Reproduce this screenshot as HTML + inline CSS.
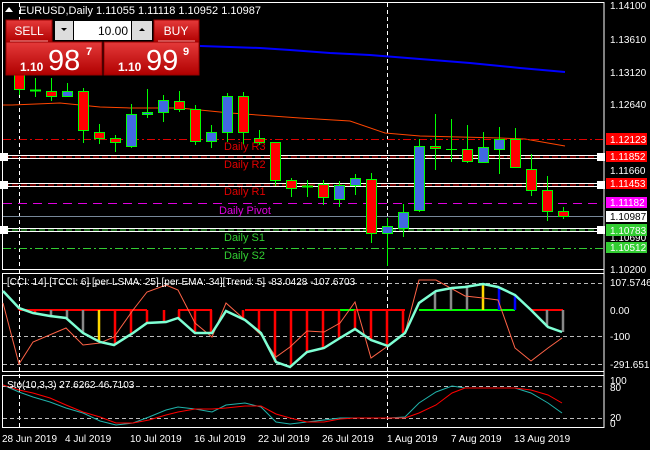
<!DOCTYPE html>
<html><head><meta charset="utf-8"><style>
html,body{margin:0;padding:0;background:#000;width:650px;height:450px;overflow:hidden}
svg{display:block}
text{font-family:"Liberation Sans",sans-serif}
.ax{fill:#fff;font-size:10px}
</style></head><body>
<svg width="650" height="450" viewBox="0 0 650 450" xmlns="http://www.w3.org/2000/svg">
<!-- borders -->
<rect x="2.5" y="2.5" width="601.5" height="267" fill="none" stroke="#fff" stroke-width="1"/>
<rect x="2.5" y="273.5" width="601.5" height="98" fill="none" stroke="#fff" stroke-width="1"/>
<rect x="2.5" y="375.5" width="601.5" height="52" fill="none" stroke="#fff" stroke-width="1"/>
<line x1="604" y1="2" x2="604" y2="428" stroke="#fff"/>
<!-- vertical dashed -->
<g stroke="#fff" stroke-dasharray="4,3">
<line x1="19.5" y1="3" x2="19.5" y2="427"/>
<line x1="387.5" y1="3" x2="387.5" y2="427"/>
</g>
<!-- MAs -->
<polyline fill="none" stroke="#0000ff" stroke-width="2" points="200,46 230,47 260,48 290,50 330,53 370,55 420,59 470,63 520,68 565,72"/>
<polyline fill="none" stroke="#ff4500" stroke-width="1" points="3,105 12,105 60,103 100,107 130,108 180,108 230,113 300,118 350,121 385,133 420,136 460,137 500,138 525,139 565,146"/>
<!-- level lines -->
<line x1="3" y1="139.5" x2="604" y2="139.5" stroke="#e00000" stroke-dasharray="8,3,2,3"/>
<line x1="3" y1="155.5" x2="604" y2="155.5" stroke="#fff"/>
<line x1="3" y1="158.5" x2="604" y2="158.5" stroke="#fff"/>
<line x1="3" y1="157" x2="604" y2="157" stroke="#e00000" stroke-dasharray="6,3"/>
<line x1="3" y1="183.5" x2="604" y2="183.5" stroke="#fff"/>
<line x1="3" y1="186.5" x2="604" y2="186.5" stroke="#fff"/>
<line x1="3" y1="185" x2="604" y2="185" stroke="#e00000" stroke-dasharray="6,3"/>
<line x1="3" y1="203.5" x2="604" y2="203.5" stroke="#e000e0" stroke-dasharray="9,6"/>
<line x1="3" y1="216.5" x2="604" y2="216.5" stroke="#778899"/>
<line x1="3" y1="228.5" x2="604" y2="228.5" stroke="#fff"/>
<line x1="3" y1="231.5" x2="604" y2="231.5" stroke="#fff"/>
<line x1="3" y1="230" x2="604" y2="230" stroke="#32cd32" stroke-dasharray="6,3"/>
<line x1="3" y1="248.5" x2="604" y2="248.5" stroke="#32cd32" stroke-dasharray="8,3,2,3"/>
<g fill="#fff"><rect x="0" y="153" width="8" height="8"/><rect x="0" y="181" width="8" height="8"/><rect x="0" y="226" width="8" height="8"/>
<rect x="597" y="153" width="8" height="8"/><rect x="597" y="181" width="8" height="8"/><rect x="597" y="226" width="8" height="8"/></g>
<g font-size="11">
<text x="224" y="150" fill="#e00000">Daily R3</text>
<text x="224" y="168" fill="#e00000">Daily R2</text>
<text x="224" y="195" fill="#e00000">Daily R1</text>
<text x="219" y="214" fill="#e000e0">Daily Pivot</text>
<text x="224" y="241" fill="#32cd32">Daily S1</text>
<text x="224" y="259" fill="#32cd32">Daily S2</text>
</g>
<!-- candles -->
<g stroke="#00ff00" stroke-width="1">
<line x1="19.5" y1="70" x2="19.5" y2="95"/><rect x="14.5" y="70.5" width="10" height="19" fill="#ff0000"/>
<line x1="35.5" y1="78" x2="35.5" y2="97"/><line x1="30" y1="90.5" x2="41" y2="90.5" stroke-width="2"/>
<line x1="51.5" y1="78" x2="51.5" y2="101"/><rect x="46.5" y="91.5" width="10" height="5" fill="#ff0000"/>
<line x1="67.5" y1="83" x2="67.5" y2="97"/><rect x="62.5" y="91.5" width="10" height="5" fill="#4169e1"/>
<line x1="83.5" y1="88" x2="83.5" y2="143"/><rect x="78.5" y="91.5" width="10" height="39" fill="#ff0000"/>
<line x1="99.5" y1="124" x2="99.5" y2="144"/><rect x="94.5" y="132.5" width="10" height="6" fill="#ff0000"/>
<line x1="115.5" y1="135" x2="115.5" y2="152"/><rect x="110.5" y="138.5" width="10" height="4" fill="#ff0000"/>
<line x1="131.5" y1="104" x2="131.5" y2="148"/><rect x="126.5" y="114.5" width="10" height="32" fill="#4169e1"/>
<line x1="147.5" y1="89" x2="147.5" y2="118"/><rect x="142.5" y="112.5" width="10" height="2" fill="#4169e1"/>
<line x1="163.5" y1="95" x2="163.5" y2="122"/><rect x="158.5" y="100.5" width="10" height="12" fill="#4169e1"/>
<line x1="179.5" y1="91" x2="179.5" y2="112"/><rect x="174.5" y="101.5" width="10" height="8" fill="#ff0000"/>
<line x1="195.5" y1="105" x2="195.5" y2="145"/><rect x="190.5" y="109.5" width="10" height="32" fill="#ff0000"/>
<line x1="211.5" y1="125" x2="211.5" y2="148"/><rect x="206.5" y="132.5" width="10" height="9" fill="#4169e1"/>
<line x1="227.5" y1="93" x2="227.5" y2="142"/><rect x="222.5" y="96.5" width="10" height="36" fill="#4169e1"/>
<line x1="243.5" y1="92" x2="243.5" y2="144"/><rect x="238.5" y="96.5" width="10" height="36" fill="#ff0000"/>
<line x1="259.5" y1="130" x2="259.5" y2="145"/><rect x="254.5" y="138.5" width="10" height="4" fill="#ff0000"/>
<line x1="275.5" y1="142" x2="275.5" y2="186"/><rect x="270.5" y="142.5" width="10" height="38" fill="#ff0000"/>
<line x1="291.5" y1="178" x2="291.5" y2="197"/><rect x="286.5" y="180.5" width="10" height="8" fill="#ff0000"/>
<line x1="307.5" y1="180" x2="307.5" y2="197"/><line x1="302" y1="186.5" x2="313" y2="186.5" stroke-width="2"/>
<line x1="323.5" y1="180" x2="323.5" y2="205"/><rect x="318.5" y="184.5" width="10" height="13" fill="#ff0000"/>
<line x1="339.5" y1="181" x2="339.5" y2="207"/><rect x="334.5" y="185.5" width="10" height="14" fill="#4169e1"/>
<line x1="355.5" y1="174" x2="355.5" y2="195"/><rect x="350.5" y="178.5" width="10" height="7" fill="#4169e1"/>
<line x1="371.5" y1="173" x2="371.5" y2="243"/><rect x="366.5" y="179.5" width="10" height="54" fill="#ff0000"/>
<line x1="387.5" y1="218" x2="387.5" y2="266"/><rect x="382.5" y="226.5" width="10" height="7" fill="#4169e1"/>
<line x1="403.5" y1="204" x2="403.5" y2="237"/><rect x="398.5" y="212.5" width="10" height="16" fill="#4169e1"/>
<line x1="419.5" y1="139" x2="419.5" y2="212"/><rect x="414.5" y="146.5" width="10" height="64" fill="#4169e1"/>
<line x1="435.5" y1="114" x2="435.5" y2="170"/><rect x="430.5" y="146.5" width="10" height="2" fill="#ff0000"/>
<line x1="451.5" y1="119" x2="451.5" y2="162"/><line x1="446" y1="149.5" x2="457" y2="149.5"/>
<line x1="467.5" y1="125" x2="467.5" y2="163"/><rect x="462.5" y="149.5" width="10" height="12" fill="#ff0000"/>
<line x1="483.5" y1="132" x2="483.5" y2="163"/><rect x="478.5" y="147.5" width="10" height="15" fill="#4169e1"/>
<line x1="499.5" y1="127" x2="499.5" y2="174"/><rect x="494.5" y="139.5" width="10" height="10" fill="#4169e1"/>
<line x1="515.5" y1="128" x2="515.5" y2="168"/><rect x="510.5" y="139.5" width="10" height="28" fill="#ff0000"/>
<line x1="531.5" y1="154" x2="531.5" y2="196"/><rect x="526.5" y="169.5" width="10" height="21" fill="#ff0000"/>
<line x1="547.5" y1="176" x2="547.5" y2="221"/><rect x="542.5" y="190.5" width="10" height="21" fill="#ff0000"/>
<line x1="563.5" y1="207" x2="563.5" y2="219"/><rect x="558.5" y="211.5" width="10" height="5" fill="#ff0000"/>
</g>
<!-- price axis -->
<g class="ax">
<text x="610" y="9">1.14100</text>
<text x="610" y="43">1.13610</text>
<text x="610" y="76">1.13120</text>
<text x="610" y="108">1.12640</text>
<text x="610" y="174">1.11660</text>
<text x="610" y="241">1.10690</text>
<text x="610" y="273">1.10200</text>
</g>
<rect x="606" y="133" width="41" height="12" fill="#ff0000"/><text x="610" y="143" class="ax">1.12123</text>
<rect x="606" y="151" width="41" height="11" fill="#ff0000"/><text x="610" y="160" class="ax">1.11852</text>
<rect x="606" y="178" width="41" height="11" fill="#ff0000"/><text x="610" y="187" class="ax">1.11453</text>
<rect x="606" y="197" width="41" height="11" fill="#ff00ff"/><text x="610" y="206" class="ax">1.11182</text>
<rect x="606" y="211" width="41" height="11" fill="#fff"/><text x="610" y="220" class="ax" style="fill:#000">1.10987</text>
<rect x="606" y="224" width="41" height="12" fill="#32cd32"/><text x="610" y="234" class="ax">1.10783</text>
<rect x="606" y="242" width="41" height="11" fill="#32cd32"/><text x="610" y="251" class="ax">1.10512</text>
<!-- CCI panel -->
<g stroke="#bbb" stroke-dasharray="4,3"><line x1="3" y1="283.5" x2="604" y2="283.5"/><line x1="3" y1="336.5" x2="604" y2="336.5"/><line x1="3" y1="364.5" x2="604" y2="364.5"/>
<line x1="3" y1="386.5" x2="604" y2="386.5"/><line x1="3" y1="418.5" x2="604" y2="418.5"/></g>
<g stroke-width="2">
<line x1="19" y1="310" x2="147" y2="310" stroke="#ff0000"/>
<line x1="178" y1="310" x2="212" y2="310" stroke="#ff0000"/>
<line x1="245" y1="310" x2="405" y2="310" stroke="#ff0000"/>
<line x1="340" y1="310" x2="355" y2="310" stroke="#00ff00"/>
<line x1="419" y1="310" x2="515" y2="310" stroke="#00ff00"/>
<line x1="531" y1="310" x2="563" y2="310" stroke="#ff0000"/>
</g>
<g stroke-width="2.5">
<line x1="19" y1="310" x2="19" y2="308" stroke="#ff0000"/>
<line x1="35" y1="310" x2="35" y2="313" stroke="#ff0000"/>
<line x1="51" y1="310" x2="51" y2="316" stroke="#888"/>
<line x1="67" y1="310" x2="67" y2="318" stroke="#888"/>
<line x1="83" y1="310" x2="83" y2="333" stroke="#888"/>
<line x1="99" y1="310" x2="99" y2="342" stroke="#ffd700"/>
<line x1="115" y1="310" x2="115" y2="345" stroke="#ff0000"/>
<line x1="131" y1="310" x2="131" y2="333" stroke="#ff0000"/>
<line x1="147" y1="310" x2="147" y2="323" stroke="#ff0000"/>
<line x1="164" y1="310" x2="164" y2="322" stroke="#ff0000"/>
<line x1="179" y1="310" x2="179" y2="318" stroke="#ff0000"/>
<line x1="195" y1="310" x2="195" y2="333" stroke="#ff0000"/>
<line x1="211" y1="310" x2="211" y2="333" stroke="#ff0000"/>
<line x1="243" y1="310" x2="243" y2="320" stroke="#ff0000"/>
<line x1="259" y1="310" x2="259" y2="333" stroke="#ff0000"/>
<line x1="275" y1="310" x2="275" y2="362" stroke="#ff0000"/>
<line x1="291" y1="310" x2="291" y2="367" stroke="#ff0000"/>
<line x1="307" y1="310" x2="307" y2="352" stroke="#ff0000"/>
<line x1="323" y1="310" x2="323" y2="348" stroke="#ff0000"/>
<line x1="339" y1="310" x2="339" y2="338" stroke="#ff0000"/>
<line x1="355" y1="310" x2="355" y2="329" stroke="#ff0000"/>
<line x1="371" y1="310" x2="371" y2="340" stroke="#ff0000"/>
<line x1="387" y1="310" x2="387" y2="346" stroke="#ff0000"/>
<line x1="403" y1="310" x2="403" y2="333" stroke="#ff0000"/>
<line x1="435" y1="310" x2="435" y2="291" stroke="#888"/>
<line x1="451" y1="310" x2="451" y2="288" stroke="#888"/>
<line x1="467" y1="310" x2="467" y2="287" stroke="#888"/>
<line x1="483" y1="310" x2="483" y2="284" stroke="#ffd700"/>
<line x1="499" y1="310" x2="499" y2="287" stroke="#0000ff"/>
<line x1="515" y1="310" x2="515" y2="295" stroke="#0000ff"/>
<line x1="547" y1="310" x2="547" y2="327" stroke="#888"/>
<line x1="563" y1="310" x2="563" y2="332" stroke="#888"/>
</g>
<polyline fill="none" stroke="#ff6347" stroke-width="1" points="3,303 19,364 33,342 66,328 83,345 100,343 114,337 133,310 147,292 166,285 178,290 195,323 212,337 226,303 245,320 261,335 276,357 290,347 307,331 324,332 340,323 355,302 371,358 388,346 405,333 419,280 436,280 465,296 483,298 498,300 515,348 531,361 548,348 562,338"/>
<polyline fill="none" stroke="#7fffd4" stroke-width="2.5" points="3,291 19,308 33,313 50,316 66,318 83,333 100,342 114,345 133,333 147,323 166,322 178,318 195,333 212,333 226,311 245,320 261,333 276,362 290,367 307,352 324,348 340,338 355,329 371,340 388,346 405,333 419,303 436,291 452,288 465,287 483,284 498,287 515,295 531,310 548,327 562,332"/>
<text x="7" y="285" fill="#fff" font-size="10">[CCI: 14] [TCCI: 6] [per LSMA: 25] [per EMA: 34][Trend: 5] -83.0428 -107.6703</text>
<g class="ax">
<text x="610" y="286">107.5746</text>
<text x="610" y="314">0.00</text>
<text x="610" y="340">-100</text>
<text x="610" y="368">-291.6516</text>
<text x="610" y="384">100</text>
<text x="610" y="391">80</text>
<text x="610" y="421">20</text>
<text x="610" y="427">0</text>
</g>
<!-- Stoch -->
<polyline fill="none" stroke="#20b2aa" stroke-width="1" points="3,385 19,392 33,397 50,402 66,408 83,413 100,421 116,425 133,423 149,417 166,410 178,407 195,409 212,412 226,405 245,403 261,407 276,422 290,424 307,422 324,420 340,418 355,418 371,418 388,418 405,417 419,403 436,392 452,386 465,388 483,388 515,388 531,393 548,403 562,413"/>
<polyline fill="none" stroke="#ff0000" stroke-width="1" points="3,385 19,390 33,393 50,398 66,405 83,412 100,417 116,423 133,423 149,420 166,415 178,412 195,409 212,409 226,408 245,406 261,406 276,414 290,418 307,422 324,422 340,419 355,418 388,418 405,418 419,413 436,405 452,393 465,388 515,388 531,390 548,395 562,403"/>
<text x="7" y="388" fill="#fff" font-size="10">Sto(10,3,3) 27.6262 46.7103</text>
<!-- dates -->
<g class="ax">
<text x="2" y="442">28 Jun 2019</text>
<text x="65" y="442">4 Jul 2019</text>
<text x="130" y="442">10 Jul 2019</text>
<text x="194" y="442">16 Jul 2019</text>
<text x="258" y="442">22 Jul 2019</text>
<text x="322" y="442">26 Jul 2019</text>
<text x="387" y="442">1 Aug 2019</text>
<text x="451" y="442">7 Aug 2019</text>
<text x="514" y="442">13 Aug 2019</text>
</g>
<!-- title -->
<path d="M5 12 L9 7 L13 12 Z" fill="#fff"/>
<text x="19" y="14" fill="#fff" font-size="11">EURUSD,Daily  1.11055 1.11118 1.10952 1.10987</text>
<!-- trade panel -->
<defs><linearGradient id="rg" x1="0" y1="0" x2="0" y2="1"><stop offset="0" stop-color="#e53a3a"/><stop offset="1" stop-color="#b00000"/></linearGradient></defs>
<rect x="6" y="20" width="46" height="22" fill="url(#rg)" stroke="#900" />
<line x1="10" y1="41" x2="48" y2="41" stroke="#f99"/>
<text x="29" y="35" fill="#fff" font-size="12" text-anchor="middle">SELL</text>
<rect x="154" y="20" width="45" height="22" fill="url(#rg)" stroke="#900"/>
<line x1="158" y1="41" x2="195" y2="41" stroke="#f99"/>
<text x="176" y="35" fill="#fff" font-size="12" text-anchor="middle">BUY</text>
<rect x="53" y="19" width="100" height="22" fill="#000"/>
<rect x="55" y="21" width="18" height="19" fill="#ddd"/>
<rect x="74" y="21" width="57" height="19" fill="#fff"/>
<rect x="132" y="21" width="20" height="19" fill="#ddd"/>
<path d="M61 28 L67 28 L64 31 Z" fill="#000"/><path d="M139 31 L145 31 L142 28 Z" fill="#000"/>
<text x="128" y="35" fill="#000" font-size="12" text-anchor="end">10.00</text>
<rect x="6" y="42" width="96" height="33" fill="url(#rg)" stroke="#900"/>
<rect x="104" y="42" width="95" height="33" fill="url(#rg)" stroke="#900"/>
<text x="20" y="71" fill="#fff" font-size="12" font-weight="bold">1.10</text>
<text x="48" y="70" fill="#fff" font-size="29">98</text>
<text x="86" y="55" fill="#fff" font-size="11" font-weight="bold">7</text>
<text x="118" y="71" fill="#fff" font-size="12" font-weight="bold">1.10</text>
<text x="146" y="70" fill="#fff" font-size="29">99</text>
<text x="183" y="55" fill="#fff" font-size="11" font-weight="bold">9</text>
</svg>
</body></html>
